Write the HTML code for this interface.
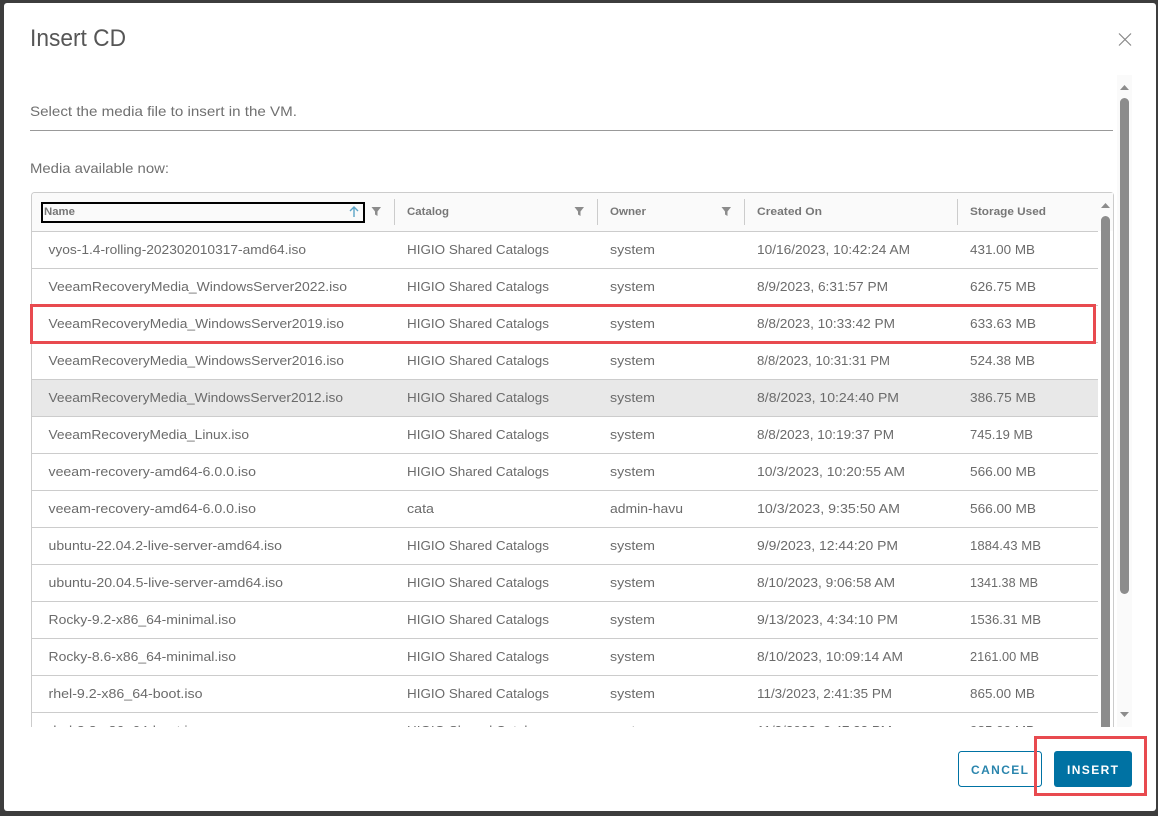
<!DOCTYPE html>
<html lang="en">
<head>
<meta charset="utf-8">
<title>Insert CD</title>
<style>
html,body{margin:0;padding:0;width:1158px;height:816px;overflow:hidden;background:#3d3d3d}
svg{display:block;font-family:"Liberation Sans",sans-serif}
.c{font-size:13px;fill:#6b6b6b}
.h{font-size:11px;font-weight:bold;fill:#777}
</style>
</head>
<body>
<svg width="1158" height="816" viewBox="0 0 1158 816" xmlns="http://www.w3.org/2000/svg">
<defs><clipPath id="clip"><rect x="0" y="0" width="1158" height="727"/></clipPath></defs>
<rect width="1158" height="816" fill="#3d3d3d"/>
<rect x="4" y="3" width="1152" height="808" rx="3" fill="#fff"/>

<text x="30" y="46" font-size="24" fill="#565656" textLength="96" lengthAdjust="spacingAndGlyphs">Insert CD</text>
<path d="M1119 33.5L1131 45.5M1131 33.5L1119 45.5" stroke="#888" stroke-width="1.2" fill="none"/>

<text x="30" y="116" font-size="14" fill="#707070" textLength="267" lengthAdjust="spacingAndGlyphs">Select the media file to insert in the VM.</text>
<rect x="30" y="130" width="1083" height="1" fill="#999"/>
<text x="30" y="173" font-size="14" fill="#707070" textLength="139" lengthAdjust="spacingAndGlyphs">Media available now:</text>

<!-- outer scrollbar -->
<rect x="1117" y="75" width="15" height="652" fill="#fafafa"/>
<path d="M1120 90L1124.5 85L1129 90Z" fill="#8c8c8c"/>
<rect x="1120" y="98" width="9" height="496" rx="4.5" fill="#8c8c8c"/>
<path d="M1120 712L1129 712L1124.5 717Z" fill="#8c8c8c"/>

<g clip-path="url(#clip)">
<!-- table -->
<rect x="31.500" y="192.500" width="1082" height="600" rx="3" fill="#fff" stroke="#ccc"/>
<path d="M32 231V196a3 3 0 0 1 3-3H1110a3 3 0 0 1 3 3V231Z" fill="#fafafa"/>
<rect x="32" y="380" width="1066" height="36" fill="#e8e8e8"/>
<g fill="#ccc">
<rect x="32" y="231" width="1066" height="1"/>
<rect x="32" y="268" width="1066" height="1"/>
<rect x="32" y="305" width="1066" height="1"/>
<rect x="32" y="342" width="1066" height="1"/>
<rect x="32" y="379" width="1066" height="1"/>
<rect x="32" y="416" width="1066" height="1"/>
<rect x="32" y="453" width="1066" height="1"/>
<rect x="32" y="490" width="1066" height="1"/>
<rect x="32" y="527" width="1066" height="1"/>
<rect x="32" y="564" width="1066" height="1"/>
<rect x="32" y="601" width="1066" height="1"/>
<rect x="32" y="638" width="1066" height="1"/>
<rect x="32" y="675" width="1066" height="1"/>
<rect x="32" y="712" width="1066" height="1"/>
<rect x="394" y="199" width="1" height="26"/>
<rect x="597" y="199" width="1" height="26"/>
<rect x="744" y="199" width="1" height="26"/>
<rect x="957" y="199" width="1" height="26"/>
</g>

<rect x="1098" y="193" width="15" height="38" fill="#fafafa"/>
<rect x="1098" y="232" width="15" height="500" fill="#fff"/>
<path d="M1101 208L1105.500 203L1110 208Z" fill="#8c8c8c"/>
<rect x="1101" y="216" width="9" height="520" rx="4.500" fill="#8c8c8c"/>

<!-- header -->
<rect x="42" y="203" width="322" height="19" fill="none" stroke="#000" stroke-width="2"/>
<text class="h" x="44" y="215" textLength="31" lengthAdjust="spacingAndGlyphs">Name</text>
<path d="M354 217V207M350 211L354 207L358 211" stroke="#5ba4c7" stroke-width="1.4" fill="none"/>
<path d="M371.500 207H381L377.500 211.500V216L375 214.500V211.500Z" fill="#8c8c8c"/>
<text class="h" x="407" y="215" textLength="42" lengthAdjust="spacingAndGlyphs">Catalog</text>
<path d="M574.500 207H584L580.500 211.500V216L578 214.500V211.500Z" fill="#8c8c8c"/>
<text class="h" x="610" y="215" textLength="36" lengthAdjust="spacingAndGlyphs">Owner</text>
<path d="M721.500 207H731L727.500 211.500V216L725 214.500V211.500Z" fill="#8c8c8c"/>
<text class="h" x="757" y="215" textLength="65" lengthAdjust="spacingAndGlyphs">Created On</text>
<text class="h" x="970" y="215" textLength="76" lengthAdjust="spacingAndGlyphs">Storage Used</text>

<!-- rows -->
<g>
<text class="c" x="48.500" y="254" textLength="257.500" lengthAdjust="spacingAndGlyphs">vyos-1.4-rolling-202302010317-amd64.iso</text>
<text class="c" x="407" y="254" textLength="142" lengthAdjust="spacingAndGlyphs">HIGIO Shared Catalogs</text>
<text class="c" x="610" y="254" textLength="45" lengthAdjust="spacingAndGlyphs">system</text>
<text class="c" x="757" y="254" textLength="153" lengthAdjust="spacingAndGlyphs">10/16/2023, 10:42:24 AM</text>
<text class="c" x="970" y="254" textLength="65" lengthAdjust="spacingAndGlyphs">431.00 MB</text>

<text class="c" x="48.500" y="291" textLength="298.500" lengthAdjust="spacingAndGlyphs">VeeamRecoveryMedia_WindowsServer2022.iso</text>
<text class="c" x="407" y="291" textLength="142" lengthAdjust="spacingAndGlyphs">HIGIO Shared Catalogs</text>
<text class="c" x="610" y="291" textLength="45" lengthAdjust="spacingAndGlyphs">system</text>
<text class="c" x="757" y="291" textLength="131" lengthAdjust="spacingAndGlyphs">8/9/2023, 6:31:57 PM</text>
<text class="c" x="970" y="291" textLength="66" lengthAdjust="spacingAndGlyphs">626.75 MB</text>

<text class="c" x="48.500" y="328" textLength="295.500" lengthAdjust="spacingAndGlyphs">VeeamRecoveryMedia_WindowsServer2019.iso</text>
<text class="c" x="407" y="328" textLength="142" lengthAdjust="spacingAndGlyphs">HIGIO Shared Catalogs</text>
<text class="c" x="610" y="328" textLength="45" lengthAdjust="spacingAndGlyphs">system</text>
<text class="c" x="757" y="328" textLength="138" lengthAdjust="spacingAndGlyphs">8/8/2023, 10:33:42 PM</text>
<text class="c" x="970" y="328" textLength="66" lengthAdjust="spacingAndGlyphs">633.63 MB</text>

<text class="c" x="48.500" y="365" textLength="295.500" lengthAdjust="spacingAndGlyphs">VeeamRecoveryMedia_WindowsServer2016.iso</text>
<text class="c" x="407" y="365" textLength="142" lengthAdjust="spacingAndGlyphs">HIGIO Shared Catalogs</text>
<text class="c" x="610" y="365" textLength="45" lengthAdjust="spacingAndGlyphs">system</text>
<text class="c" x="757" y="365" textLength="133" lengthAdjust="spacingAndGlyphs">8/8/2023, 10:31:31 PM</text>
<text class="c" x="970" y="365" textLength="65" lengthAdjust="spacingAndGlyphs">524.38 MB</text>

<text class="c" x="48.500" y="402" textLength="294.500" lengthAdjust="spacingAndGlyphs">VeeamRecoveryMedia_WindowsServer2012.iso</text>
<text class="c" x="407" y="402" textLength="142" lengthAdjust="spacingAndGlyphs">HIGIO Shared Catalogs</text>
<text class="c" x="610" y="402" textLength="45" lengthAdjust="spacingAndGlyphs">system</text>
<text class="c" x="757" y="402" textLength="142" lengthAdjust="spacingAndGlyphs">8/8/2023, 10:24:40 PM</text>
<text class="c" x="970" y="402" textLength="66" lengthAdjust="spacingAndGlyphs">386.75 MB</text>

<text class="c" x="48.500" y="439" textLength="200.500" lengthAdjust="spacingAndGlyphs">VeeamRecoveryMedia_Linux.iso</text>
<text class="c" x="407" y="439" textLength="142" lengthAdjust="spacingAndGlyphs">HIGIO Shared Catalogs</text>
<text class="c" x="610" y="439" textLength="45" lengthAdjust="spacingAndGlyphs">system</text>
<text class="c" x="757" y="439" textLength="137" lengthAdjust="spacingAndGlyphs">8/8/2023, 10:19:37 PM</text>
<text class="c" x="970" y="439" textLength="63" lengthAdjust="spacingAndGlyphs">745.19 MB</text>

<text class="c" x="48.500" y="476" textLength="207.500" lengthAdjust="spacingAndGlyphs">veeam-recovery-amd64-6.0.0.iso</text>
<text class="c" x="407" y="476" textLength="142" lengthAdjust="spacingAndGlyphs">HIGIO Shared Catalogs</text>
<text class="c" x="610" y="476" textLength="45" lengthAdjust="spacingAndGlyphs">system</text>
<text class="c" x="757" y="476" textLength="148" lengthAdjust="spacingAndGlyphs">10/3/2023, 10:20:55 AM</text>
<text class="c" x="970" y="476" textLength="66" lengthAdjust="spacingAndGlyphs">566.00 MB</text>

<text class="c" x="48.500" y="513" textLength="207.500" lengthAdjust="spacingAndGlyphs">veeam-recovery-amd64-6.0.0.iso</text>
<text class="c" x="407" y="513" textLength="27" lengthAdjust="spacingAndGlyphs">cata</text>
<text class="c" x="610" y="513" textLength="73" lengthAdjust="spacingAndGlyphs">admin-havu</text>
<text class="c" x="757" y="513" textLength="143" lengthAdjust="spacingAndGlyphs">10/3/2023, 9:35:50 AM</text>
<text class="c" x="970" y="513" textLength="66" lengthAdjust="spacingAndGlyphs">566.00 MB</text>

<text class="c" x="48.500" y="550" textLength="233.500" lengthAdjust="spacingAndGlyphs">ubuntu-22.04.2-live-server-amd64.iso</text>
<text class="c" x="407" y="550" textLength="142" lengthAdjust="spacingAndGlyphs">HIGIO Shared Catalogs</text>
<text class="c" x="610" y="550" textLength="45" lengthAdjust="spacingAndGlyphs">system</text>
<text class="c" x="757" y="550" textLength="141" lengthAdjust="spacingAndGlyphs">9/9/2023, 12:44:20 PM</text>
<text class="c" x="970" y="550" textLength="71" lengthAdjust="spacingAndGlyphs">1884.43 MB</text>

<text class="c" x="48.500" y="587" textLength="234.500" lengthAdjust="spacingAndGlyphs">ubuntu-20.04.5-live-server-amd64.iso</text>
<text class="c" x="407" y="587" textLength="142" lengthAdjust="spacingAndGlyphs">HIGIO Shared Catalogs</text>
<text class="c" x="610" y="587" textLength="45" lengthAdjust="spacingAndGlyphs">system</text>
<text class="c" x="757" y="587" textLength="138" lengthAdjust="spacingAndGlyphs">8/10/2023, 9:06:58 AM</text>
<text class="c" x="970" y="587" textLength="68" lengthAdjust="spacingAndGlyphs">1341.38 MB</text>

<text class="c" x="48.500" y="624" textLength="187.500" lengthAdjust="spacingAndGlyphs">Rocky-9.2-x86_64-minimal.iso</text>
<text class="c" x="407" y="624" textLength="142" lengthAdjust="spacingAndGlyphs">HIGIO Shared Catalogs</text>
<text class="c" x="610" y="624" textLength="45" lengthAdjust="spacingAndGlyphs">system</text>
<text class="c" x="757" y="624" textLength="141" lengthAdjust="spacingAndGlyphs">9/13/2023, 4:34:10 PM</text>
<text class="c" x="970" y="624" textLength="71" lengthAdjust="spacingAndGlyphs">1536.31 MB</text>

<text class="c" x="48.500" y="661" textLength="187.500" lengthAdjust="spacingAndGlyphs">Rocky-8.6-x86_64-minimal.iso</text>
<text class="c" x="407" y="661" textLength="142" lengthAdjust="spacingAndGlyphs">HIGIO Shared Catalogs</text>
<text class="c" x="610" y="661" textLength="45" lengthAdjust="spacingAndGlyphs">system</text>
<text class="c" x="757" y="661" textLength="146" lengthAdjust="spacingAndGlyphs">8/10/2023, 10:09:14 AM</text>
<text class="c" x="970" y="661" textLength="69" lengthAdjust="spacingAndGlyphs">2161.00 MB</text>

<text class="c" x="48.500" y="698" textLength="154" lengthAdjust="spacingAndGlyphs">rhel-9.2-x86_64-boot.iso</text>
<text class="c" x="407" y="698" textLength="142" lengthAdjust="spacingAndGlyphs">HIGIO Shared Catalogs</text>
<text class="c" x="610" y="698" textLength="45" lengthAdjust="spacingAndGlyphs">system</text>
<text class="c" x="757" y="698" textLength="135" lengthAdjust="spacingAndGlyphs">11/3/2023, 2:41:35 PM</text>
<text class="c" x="970" y="698" textLength="65" lengthAdjust="spacingAndGlyphs">865.00 MB</text>

<text class="c" x="48.500" y="735" textLength="154" lengthAdjust="spacingAndGlyphs">rhel-8.8-x86_64-boot.iso</text>
<text class="c" x="407" y="735" textLength="142" lengthAdjust="spacingAndGlyphs">HIGIO Shared Catalogs</text>
<text class="c" x="610" y="735" textLength="45" lengthAdjust="spacingAndGlyphs">system</text>
<text class="c" x="757" y="735" textLength="135" lengthAdjust="spacingAndGlyphs">11/3/2023, 2:47:33 PM</text>
<text class="c" x="970" y="735" textLength="65" lengthAdjust="spacingAndGlyphs">985.00 MB</text>
</g>
</g>

<!-- footer buttons -->
<rect x="958.500" y="751.500" width="83" height="35" rx="3" fill="#fff" stroke="#0072a3"/>
<text x="971" y="774" font-size="12" font-weight="bold" fill="#2a85ad" textLength="57" lengthAdjust="spacing">CANCEL</text>
<rect x="1054" y="751" width="78" height="36" rx="3" fill="#0072a3"/>
<text x="1067" y="774" font-size="12" font-weight="bold" fill="#fff" textLength="51" lengthAdjust="spacing">INSERT</text>

<!-- red annotations -->
<rect x="31.500" y="305.500" width="1063" height="37" fill="none" stroke="#e84a4f" stroke-width="3"/>
<rect x="1035.500" y="737.500" width="110" height="57" fill="none" stroke="#e84a4f" stroke-width="3"/>
</svg>
</body>
</html>
